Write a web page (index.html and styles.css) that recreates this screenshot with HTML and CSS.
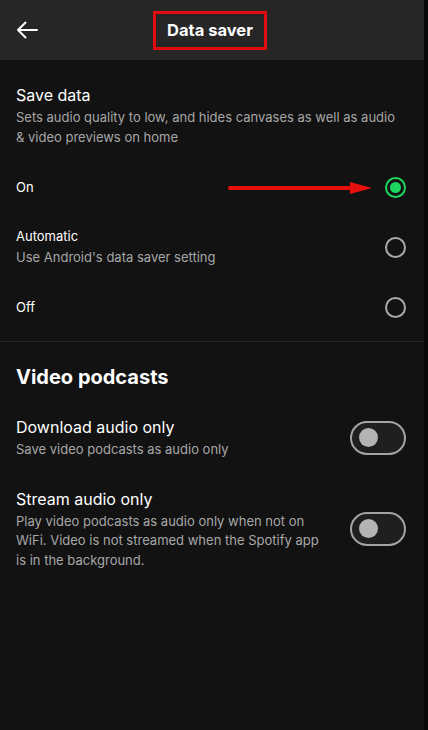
FILE: index.html
```html
<!DOCTYPE html>
<html>
<head>
<meta charset="utf-8">
<link rel="stylesheet" href="styles.css">
</head>
<body>
<div class="screen">
  <header class="topbar">
    <div class="back">
      <svg width="22" height="18" viewBox="0 0 22 18"><path d="M21 9H2M9.5 1.5L2 9l7.5 7.5" fill="none" stroke="#fff" stroke-width="2" stroke-linecap="round" stroke-linejoin="round"/></svg>
    </div>
    <h1 class="title">Data saver</h1>
    <div class="spacer"></div>
  </header>

  <section class="section">
    <div class="intro">
      <div class="label-lg">Save data</div>
      <div class="sub">Sets audio quality to low, and hides canvases as well as audio &amp; video previews on home</div>
    </div>
    <div class="option">
      <div class="texts"><div class="label">On</div></div>
      <span class="radio checked"></span>
      <div class="arrow">
        <span class="shaft"></span><span class="head"></span>
      </div>
    </div>
    <div class="option">
      <div class="texts">
        <div class="label">Automatic</div>
        <div class="sub">Use Android's data saver setting</div>
      </div>
      <span class="radio"></span>
    </div>
    <div class="option">
      <div class="texts"><div class="label">Off</div></div>
      <span class="radio"></span>
    </div>
  </section>

  <section class="section video">
    <h2 class="heading">Video podcasts</h2>
    <div class="toggle-row">
      <div class="texts">
        <div class="label-lg">Download audio only</div>
        <div class="sub">Save video podcasts as audio only</div>
      </div>
      <span class="switch"><span class="knob"></span></span>
    </div>
    <div class="toggle-row">
      <div class="texts">
        <div class="label-lg">Stream audio only</div>
        <div class="sub">Play video podcasts as audio only when not on WiFi. Video is not streamed when the Spotify app is in the background.</div>
      </div>
      <span class="switch"><span class="knob"></span></span>
    </div>
  </section>
</div>
</body>
</html>
```

FILE: styles.css
```css
* { box-sizing: border-box; }
html, body { margin: 0; padding: 0; background: #121212; }
body {
  font-family: Inter, "Noto Sans", Roboto, sans-serif;
  color: #fff;
  width: 428px;
  height: 730px;
  overflow: hidden;
}
.screen {
  width: 428px;
  height: 730px;
  background: #121212;
  border-right: 4px solid #080808;
}
.topbar {
  height: 60px;
  background: #262626;
  display: flex;
  align-items: center;
  padding: 0 16px;
}
.back { width: 40px; display: flex; align-items: center; }
.spacer { width: 40px; }
.title {
  flex: none;
  margin: 0 auto;
  padding: 5px 11px 6px;
  border: 3px solid #e10b10;
  font-size: 16.5px;
  font-weight: 700;
  line-height: 22px;
  transform: translateX(-2px);
}
.section { padding: 0 18px 0 16px; }
.section + .section { border-top: 1px solid #282828; }
.intro { padding-top: 24px; padding-bottom: 10px; }
.label-lg { font-size: 16px; line-height: 22px; }
.label { font-size: 13px; line-height: 20px; }
.sub { font-size: 13px; line-height: 19.5px; color: #a7a7a7; margin-top: 2px; }
.option {
  position: relative;
  height: 60px;
  display: flex;
  align-items: center;
  justify-content: space-between;
}
.option:last-child { margin-bottom: 4px; }
.texts { flex: 1; padding-right: 24px; }
.radio {
  width: 21px; height: 21px;
  border-radius: 50%;
  border: 2px solid #aaaaaa;
  flex: none;
  display: flex; align-items: center; justify-content: center;
}
.radio.checked { border-color: #1ed760; }
.radio.checked::after {
  content: "";
  width: 11px; height: 11px;
  border-radius: 50%;
  background: #1ed760;
}
.arrow {
  position: absolute;
  left: 212px; top: 25px;
  width: 144px; height: 12px;
  display: flex; align-items: center;
}
.shaft {
  flex: 1;
  height: 4px;
  background: #e8100f;
  border-radius: 2px;
}
.head {
  width: 0; height: 0;
  border-left: 22px solid #e8100f;
  border-top: 6px solid transparent;
  border-bottom: 6px solid transparent;
  margin-left: -2px;
}
.video { padding-top: 22px; }
.heading { margin: 0 0 26px; font-size: 20px; font-weight: 700; line-height: 26px; }
.toggle-row {
  display: flex;
  align-items: center;
  justify-content: space-between;
  margin-bottom: 28px;
}
.switch {
  flex: none;
  width: 56px; height: 34px;
  border: 2.5px solid #a4a4a4;
  border-radius: 17px;
  background: #1f1f1f;
  display: flex; align-items: center;
  padding-left: 7px;
}
.knob {
  width: 19px; height: 19px;
  border-radius: 50%;
  background: #b3b3b3;
}
```
